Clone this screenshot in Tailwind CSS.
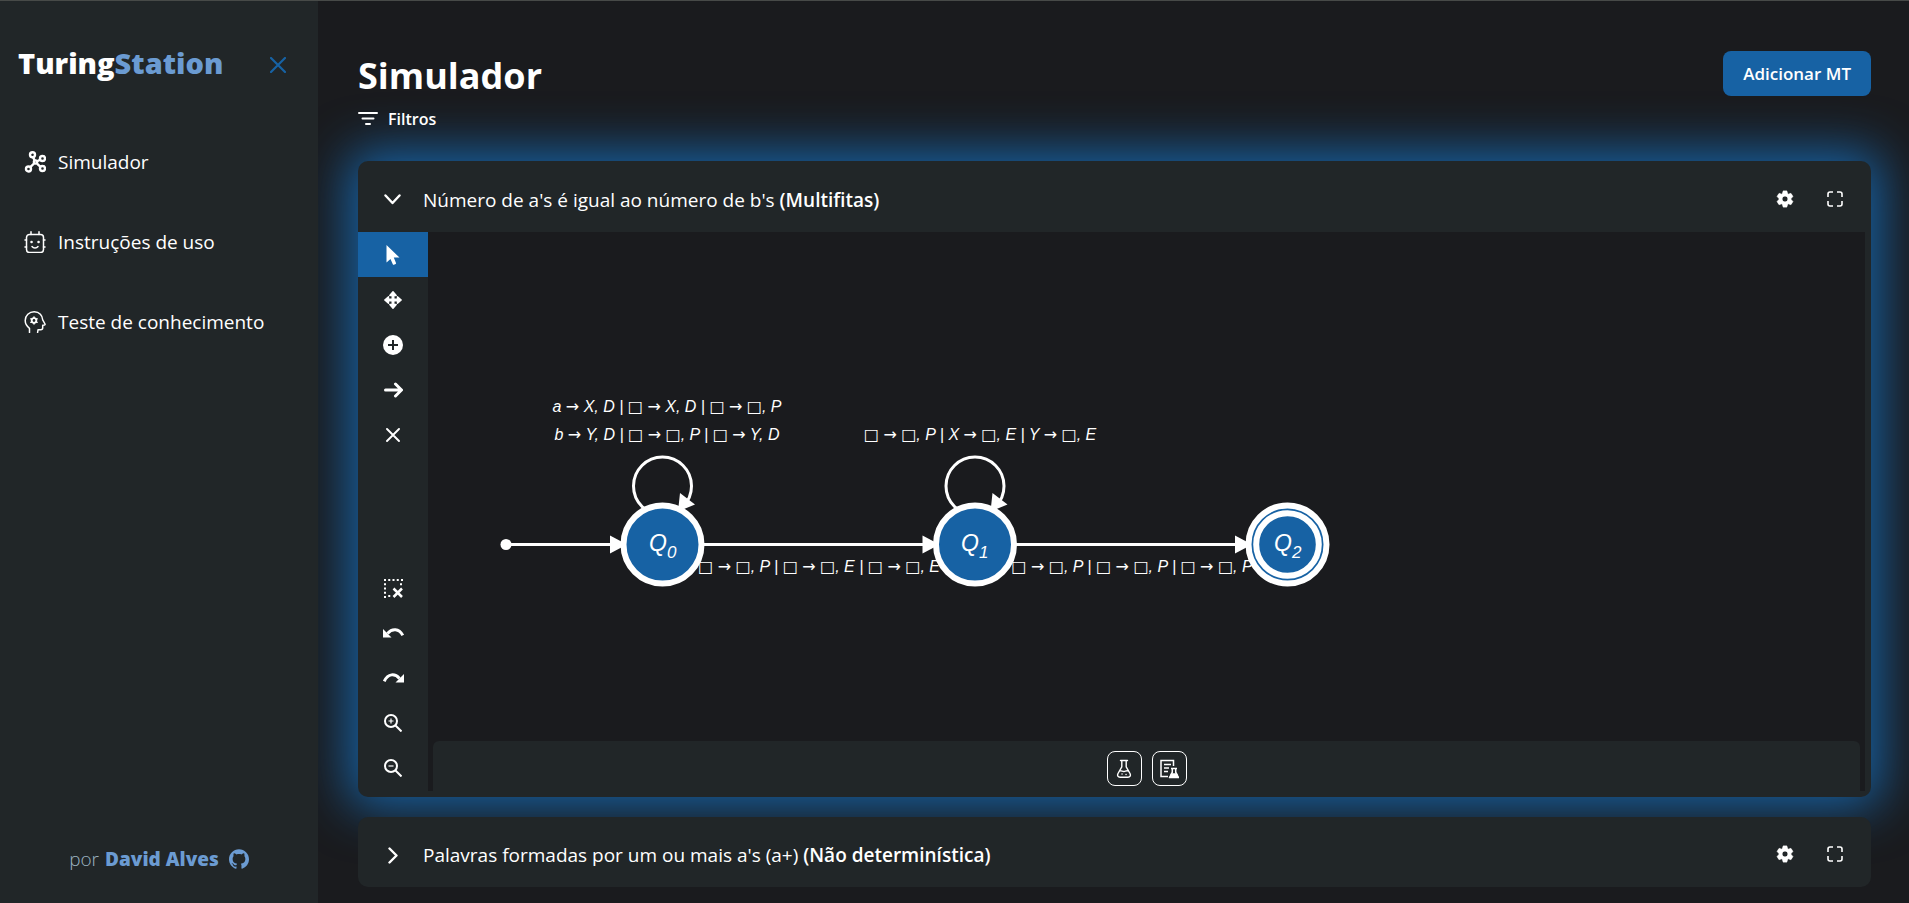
<!DOCTYPE html>
<html lang="pt-BR">
<head>
<meta charset="utf-8">
<meta name="viewport" content="width=device-width, initial-scale=1">
<title>TuringStation</title>
<script src="https://cdn.jsdelivr.net/npm/@tailwindcss/browser@4"></script>
</head>
<body class="bg-[#1a1b1e] text-white font-['Open_Sans','Noto_Sans',sans-serif]">
<div class="flex min-h-screen border-t border-[#474a48]">
  <aside class="relative z-10 flex w-[318px] shrink-0 flex-col bg-[#212628]">
    <div class="flex items-center justify-between pt-10 pl-[18px] pr-8">
      <a href="#" class="text-[29px] leading-[44px] font-extrabold">Turing<span class="text-[#6b9bd2]">Station</span></a>
      <button type="button" aria-label="Fechar menu" class="pt-1">
        <svg class="size-4" viewBox="0 0 16 16" fill="none" stroke="#1762a4" stroke-width="2.200" stroke-linecap="round"><path d="M1 1l14 14M15 1L1 15"/></svg>
      </button>
    </div>
    <nav class="mt-[62px] flex flex-col gap-[50px] pl-6 text-[19px] leading-[30px]">
      <a href="#" class="flex items-center gap-3">
        <svg class="size-[22px]" viewBox="0 0 22 22" fill="none" stroke="#fff" stroke-width="2.400"><circle cx="8.500" cy="3.800" r="2.500"/><circle cx="18.500" cy="7.500" r="2.500"/><circle cx="4.500" cy="18" r="2.500"/><circle cx="18.500" cy="17.500" r="2.500"/><circle cx="11.500" cy="11" r="1.600"/><path d="M9 6.200l1.700 3.300M13.200 10.200l2.800-1.500M13 12.600l3.500 3.200M10 12.500l-3.700 3.600"/></svg>
        <span>Simulador</span></a>
      <a href="#" class="flex items-center gap-3">
        <svg class="size-[22px]" viewBox="0 0 22 22" fill="none" stroke="#fff" stroke-width="1.500" stroke-linecap="round"><rect x="2.500" y="3.500" width="17" height="18" rx="3"/><path d="M7 3.500V.8M15 3.500V.8M2.500 9H1M2.500 16H1M19.500 9H21M19.500 16H21M8 15.500c1.500 2 4.500 2 6 0"/><path stroke-width="2.500" d="M7.500 11h.1M14.500 11h.1"/></svg>
        <span>Instruções de uso</span></a>
      <a href="#" class="flex items-center gap-3">
        <svg class="size-[22px]" viewBox="0 0 22 22" fill="none" stroke="#fff" stroke-width="1.500" stroke-linecap="round" stroke-linejoin="round"><path d="M5.500 21.500v-4.200C2.500 15 1.200 12.500 1.200 9.500c0-5 4-8.700 9-8.700 5.300 0 8.300 3.700 8.500 8l2.300 4.200c.2.500-.1.900-.6 1l-1.700.3v2.500c0 1.300-.8 2-2 2H14l-.4 2.700"/><circle cx="10" cy="9.500" r="2.300" stroke-width="1.800"/><path d="M10 6v1M10 12v1M6.900 7.800l.9.500M12.200 10.800l.9.500M6.900 11.300l.9-.5M12.200 8.300l.9-.5"/></svg>
        <span>Teste de conhecimento</span></a>
    </nav>
    <footer class="mt-auto flex items-center justify-center pb-7 text-[19px] leading-8">
      <span class="font-light text-[#9db4c2]">por</span>
      <a href="#" class="ml-1.5 flex items-center gap-2.5 font-extrabold text-[#6b9bd2]">David Alves
        <svg class="size-5" viewBox="0 0 24 24" fill="currentColor"><path d="M12 .297c-6.630 0-12 5.373-12 12 0 5.303 3.438 9.800 8.205 11.385.6.113.82-.258.82-.577 0-.285-.010-1.040-.015-2.040-3.338.724-4.042-1.610-4.042-1.610C4.422 18.070 3.633 17.700 3.633 17.700c-1.087-.744.084-.729.084-.729 1.205.084 1.838 1.236 1.838 1.236 1.070 1.835 2.809 1.305 3.495.998.108-.776.417-1.305.76-1.605-2.665-.3-5.466-1.332-5.466-5.930 0-1.310.465-2.380 1.235-3.220-.135-.303-.54-1.523.105-3.176 0 0 1.005-.322 3.300 1.230.96-.267 1.980-.399 3-.405 1.020.006 2.040.138 3 .405 2.280-1.552 3.285-1.230 3.285-1.230.645 1.653.24 2.873.12 3.176.765.840 1.230 1.910 1.230 3.220 0 4.610-2.805 5.625-5.475 5.920.42.360.81 1.096.81 2.220 0 1.606-.015 2.896-.015 3.286 0 .315.210.690.825.570C20.565 22.092 24 17.592 24 12.297c0-6.627-5.373-12-12-12"/></svg>
      </a>
    </footer>
  </aside>

  <main class="min-w-0 flex-1 overflow-hidden pt-[50px] pr-[38px] pb-4 pl-10">
    <header class="flex items-start justify-between">
      <div>
        <h1 class="text-[36px] leading-[50px] font-bold">Simulador</h1>
        <button type="button" class="mt-1.5 flex items-center gap-2.5 text-base leading-6 font-semibold">
          <svg class="h-3.5 w-5" viewBox="0 0 20 14" fill="none" stroke="#fff" stroke-width="2" stroke-linecap="round"><path d="M1 1h18M4.500 6.500h11M8 12h4"/></svg>
          Filtros
        </button>
      </div>
      <button type="button" class="rounded-lg bg-[#1762a4] px-5 text-[17px] leading-[45px] font-semibold">Adicionar MT</button>
    </header>

    <section class="mt-[30px] overflow-hidden rounded-[10px] bg-[#212628] shadow-[0_0_50px_10px_#1762a4]">
      <div class="flex h-[71px] items-center pt-1 pr-7 pl-[26px]">
        <button type="button" class="flex items-center gap-[22px] pt-0.5 text-[19px] leading-7">
          <svg class="size-[17px]" viewBox="0 0 17 17" fill="none" stroke="#fff" stroke-width="2.400" stroke-linecap="round" stroke-linejoin="round"><path d="M1.500 4.500l7 7.500 7-7.500"/></svg>
          <span>Número de a's é igual ao número de b's <b class="font-semibold">(Multifitas)</b></span>
        </button>
        <button type="button" aria-label="Configurações" class="ml-auto"><svg class="size-5" viewBox="0 0 24 24" fill="#fff" stroke="#fff"><path d="M19.140 12.940c.04-.3.06-.61.06-.94 0-.32-.02-.64-.07-.94l2.030-1.580c.18-.14.23-.41.12-.61l-1.920-3.320c-.12-.22-.37-.29-.59-.22l-2.390.96c-.5-.38-1.030-.7-1.620-.94l-.36-2.540c-.04-.24-.24-.41-.48-.41h-3.840c-.24 0-.43.17-.47.41l-.36 2.540c-.59.24-1.130.57-1.620.94l-2.390-.96c-.22-.08-.47 0-.59.22L2.740 8.870c-.12.21-.08.47.12.61l2.030 1.580c-.05.3-.09.63-.09.94s.02.64.07.94l-2.030 1.580c-.18.14-.23.41-.12.61l1.920 3.320c.12.22.37.29.59.22l2.390-.96c.5.38 1.030.7 1.620.94l.36 2.540c.05.24.24.41.48.41h3.840c.24 0 .44-.17.47-.41l.36-2.540c.59-.24 1.130-.56 1.620-.94l2.390.96c.22.08.47 0 .59-.22l1.920-3.320c.12-.22.07-.47-.12-.61l-2.010-1.580zM12 15.600c-1.980 0-3.600-1.620-3.600-3.600s1.620-3.600 3.600-3.600 3.600 1.620 3.600 3.600-1.620 3.600-3.600 3.600z"/></svg></button>
        <button type="button" aria-label="Tela cheia" class="ml-8"><svg class="size-4" viewBox="0 0 16 16" fill="none" stroke="#fff" stroke-width="1.600"><path d="M1 6V3q0-2 2-2h3M10 1h3q2 0 2 2v3M15 10v3q0 2-2 2h-3M6 15H3q-2 0-2-2v-3"/></svg></button>
      </div>

      <div class="flex min-h-[559px] pr-1.5">
        <div class="flex w-[70px] shrink-0 flex-col justify-between pb-px" role="toolbar" aria-label="Ferramentas">
          <div class="flex flex-col">
            <button type="button" aria-label="Selecionar" class="flex h-[45px] items-center justify-center bg-[#1762a4]"><svg class="h-5 w-[14px]" viewBox="0 0 14 20" fill="#fff"><path d="M.5 0v17.500l4-3.600 2.300 5.400c.2.500.6.600 1.100.4l1.800-.8c.4-.2.500-.5.300-.9l-2.200-5.400H13.500z"/></svg></button>
            <button type="button" aria-label="Mover" class="flex h-[45px] items-center justify-center"><svg class="size-[18px]" viewBox="0 0 18 18" fill="#fff" stroke="#fff" stroke-linejoin="round"><path stroke-width="3" d="M9 3v12M3 9h12"/><path stroke-width="1.400" d="M9 .8l3.200 3.700H5.800zM9 17.200l3.200-3.700H5.800zM.8 9l3.700-3.200v6.400zM17.200 9l-3.700-3.200v6.400z"/></svg></button>
            <button type="button" aria-label="Adicionar estado" class="flex h-[45px] items-center justify-center"><svg class="size-5" viewBox="0 0 20 20"><circle cx="10" cy="10" r="10" fill="#fff"/><path d="M10 5v10M5 10h10" stroke="#212628" stroke-width="2"/></svg></button>
            <button type="button" aria-label="Adicionar transição" class="flex h-[45px] items-center justify-center"><svg class="size-5" viewBox="0 0 20 20" fill="none" stroke="#fff" stroke-width="3" stroke-linecap="round" stroke-linejoin="round"><path d="M2.500 10h15.500M12.500 4l6 6-6 6"/></svg></button>
            <button type="button" aria-label="Remover" class="flex h-[45px] items-center justify-center"><svg class="size-[14px]" viewBox="0 0 14 14" fill="none" stroke="#fff" stroke-width="1.900" stroke-linecap="round"><path d="M1 1l12 12M13 1L1 13"/></svg></button>
          </div>
          <div class="flex flex-col">
            <button type="button" aria-label="Limpar seleção" class="flex h-[45px] items-center justify-center"><svg class="size-5" viewBox="0 0 20 20" fill="none" stroke="#fff"><path stroke-width="2" stroke-dasharray="2 2.250" d="M1 2h19M2 5.250v14.750M18 5.250v4M5.250 18h4"/><path stroke-width="2.500" d="M10.500 10.500l8.500 8.500M19 10.500L10.500 19"/></svg></button>
            <button type="button" aria-label="Desfazer" class="flex h-[45px] items-center justify-center"><svg class="h-[10px] w-[21px]" viewBox="0 0 21 10" fill="none" stroke="#fff" stroke-width="3"><path d="M4.500 5.500C9 .2 16 .2 19.800 7.400"/><path d="M0 1v8.500h8.500z" fill="#fff" stroke="none"/></svg></button>
            <button type="button" aria-label="Refazer" class="flex h-[45px] items-center justify-center"><svg class="h-[10px] w-[21px]" viewBox="0 0 21 10" fill="none" stroke="#fff" stroke-width="3"><path d="M16.500 5.500C12 .2 5 .2 1.200 8.400"/><path d="M21 1v8.500h-8.500z" fill="#fff" stroke="none"/></svg></button>
            <button type="button" aria-label="Aumentar zoom" class="flex h-[45px] items-center justify-center"><svg class="size-[18px]" viewBox="0 0 18 18" fill="none" stroke="#fff" stroke-width="2"><circle cx="7" cy="7" r="6"/><path d="M11 11l6.500 6.500"/><path stroke-width="1.200" d="M7 4.500v5M4.500 7h5"/></svg></button>
            <button type="button" aria-label="Diminuir zoom" class="flex h-[45px] items-center justify-center"><svg class="size-[18px]" viewBox="0 0 18 18" fill="none" stroke="#fff" stroke-width="2"><circle cx="7" cy="7" r="6"/><path d="M11 11l6.500 6.500"/><path stroke-width="1.200" d="M4.500 7h5"/></svg></button>
          </div>
        </div>

        <div class="flex min-w-0 flex-1 flex-col bg-[#1a1b1e]">
          <svg class="min-h-0 w-full flex-1 font-['Liberation_Sans',Arial,sans-serif]" role="img" aria-label="Diagrama de estados">
            <!-- transitions -->
            <g fill="none" stroke="#fff" stroke-width="3">
              <path d="M78 312.500h105M234 312.500h261M547 312.500h260"/>
              <circle cx="234.500" cy="254" r="29"/>
              <circle cx="547" cy="254" r="29"/>
            </g>
            <g fill="#fff">
              <circle cx="78" cy="312.500" r="5.500"/>
              <path d="M182 303.500v18l17-9zM494.500 303.500v18l17-9zM807 303.500v18l17-9z"/>
              <path d="M252 261l15 11.500-17 7zM564.500 261l15 11.500-17 7z"/>
            </g>
            <!-- states -->
            <g fill="#1762a4" stroke="#fff" stroke-width="6">
              <circle cx="234.500" cy="312.500" r="39"/>
              <circle cx="547" cy="312.500" r="39"/>
              <circle cx="859.500" cy="312.500" r="39"/>
              <circle cx="859.500" cy="312.500" r="31.300"/>
            </g>
            <g fill="#fff" font-style="italic" font-size="23">
              <text x="221" y="319">Q<tspan font-size="17" dy="7">0</tspan></text>
              <text x="533" y="319">Q<tspan font-size="17" dy="7">1</tspan></text>
              <text x="846" y="319">Q<tspan font-size="17" dy="7">2</tspan></text>
            </g>
            <g class="[&_tspan]:font-['DejaVu_Sans']" fill="#fff" font-style="italic" font-size="16" text-anchor="middle">
              <text x="239" y="180">a <tspan>→</tspan> X, D | <tspan>□</tspan> <tspan>→</tspan> X, D | <tspan>□</tspan> <tspan>→</tspan> <tspan>□</tspan>, P</text>
              <text x="239" y="208">b <tspan>→</tspan> Y, D | <tspan>□</tspan> <tspan>→</tspan> <tspan>□</tspan>, P | <tspan>□</tspan> <tspan>→</tspan> Y, D</text>
              <text x="552" y="208"><tspan>□</tspan> <tspan>→</tspan> <tspan>□</tspan>, P | X <tspan>→</tspan> <tspan>□</tspan>, E | Y <tspan>→</tspan> <tspan>□</tspan>, E</text>
              <text x="391" y="340"><tspan>□</tspan> <tspan>→</tspan> <tspan>□</tspan>, P | <tspan>□</tspan> <tspan>→</tspan> <tspan>□</tspan>, E | <tspan>□</tspan> <tspan>→</tspan> <tspan>□</tspan>, E</text>
              <text x="704" y="340"><tspan>□</tspan> <tspan>→</tspan> <tspan>□</tspan>, P | <tspan>□</tspan> <tspan>→</tspan> <tspan>□</tspan>, P | <tspan>□</tspan> <tspan>→</tspan> <tspan>□</tspan>, P</text>
            </g>
          </svg>
          <div class="mx-[5px] flex h-[50px] items-start justify-center gap-2.5 rounded-t-md bg-[#212628] pt-2.5">
            <button type="button" aria-label="Testar" class="flex size-[35px] items-center justify-center rounded-lg border border-white"><svg class="size-5" viewBox="0 0 20 20" fill="none" stroke="#fff" stroke-width="1.400" stroke-linecap="round" stroke-linejoin="round"><path d="M6.500 1.500h7M7.800 1.500v6.300L4 14.500c-1 2.200 0 3.700 2 3.700h8c2 0 3-1.500 2-3.700L12.200 7.800V1.500M5.500 12c1.800-.8 3 .8 4.500.5 1.700-.3 2.500-1.300 4.500-.5M8 15h.1M12 15.500h.1"/></svg></button>
            <button type="button" aria-label="Testes múltiplos" class="flex size-[35px] items-center justify-center rounded-lg border border-white"><svg class="size-5" viewBox="0 0 20 20" fill="none" stroke="#fff" stroke-width="1.500"><path d="M9 17.500H2v-16h12.500V7M5 5.500h7M5 9h5M5 12.500h4"/><path d="M12 9.500h6M13.300 9.500v3.700l-2.500 5h8.400l-2.500-5V9.500"/><path d="M12.500 15h5l1.500 3.500h-8z" fill="#fff"/></svg></button>
          </div>
        </div>
      </div>
      <div class="h-1.5"></div>
    </section>

    <section class="relative mt-5 flex h-[70px] items-center rounded-[10px] bg-[#212628] pt-1 pr-7 pl-[26px]">
      <button type="button" class="flex items-center gap-[22px] pt-0.5 text-[19px] leading-7">
        <svg class="size-[17px]" viewBox="0 0 17 17" fill="none" stroke="#fff" stroke-width="2.400" stroke-linecap="round" stroke-linejoin="round"><path d="M5.500 1.500l7 7-7 7"/></svg>
        <span>Palavras formadas por um ou mais a's (a+) <b class="font-semibold">(Não determinística)</b></span>
      </button>
      <button type="button" aria-label="Configurações" class="ml-auto"><svg class="size-5" viewBox="0 0 24 24" fill="#fff" stroke="#fff"><path d="M19.140 12.940c.04-.3.06-.61.06-.94 0-.32-.02-.64-.07-.94l2.030-1.580c.18-.14.23-.41.12-.61l-1.920-3.320c-.12-.22-.37-.29-.59-.22l-2.390.96c-.5-.38-1.030-.7-1.620-.94l-.36-2.540c-.04-.24-.24-.41-.48-.41h-3.840c-.24 0-.43.17-.47.41l-.36 2.540c-.59.24-1.130.57-1.620.94l-2.390-.96c-.22-.08-.47 0-.59.22L2.740 8.870c-.12.21-.08.47.12.61l2.030 1.580c-.05.3-.09.63-.09.94s.02.64.07.94l-2.030 1.580c-.18.14-.23.41-.12.61l1.920 3.320c.12.22.37.29.59.22l2.390-.96c.5.38 1.030.7 1.620.94l.36 2.540c.05.24.24.41.48.41h3.840c.24 0 .44-.17.47-.41l.36-2.540c.59-.24 1.130-.56 1.620-.94l2.390.96c.22.08.47 0 .59-.22l1.920-3.320c.12-.22.07-.47-.12-.61l-2.010-1.580zM12 15.600c-1.980 0-3.600-1.620-3.600-3.600s1.620-3.600 3.600-3.600 3.600 1.620 3.600 3.600-1.620 3.600-3.600 3.600z"/></svg></button>
      <button type="button" aria-label="Tela cheia" class="ml-8"><svg class="size-4" viewBox="0 0 16 16" fill="none" stroke="#fff" stroke-width="1.600"><path d="M1 6V3q0-2 2-2h3M10 1h3q2 0 2 2v3M15 10v3q0 2-2 2h-3M6 15H3q-2 0-2-2v-3"/></svg></button>
    </section>
  </main>
</div>
</body>
</html>
